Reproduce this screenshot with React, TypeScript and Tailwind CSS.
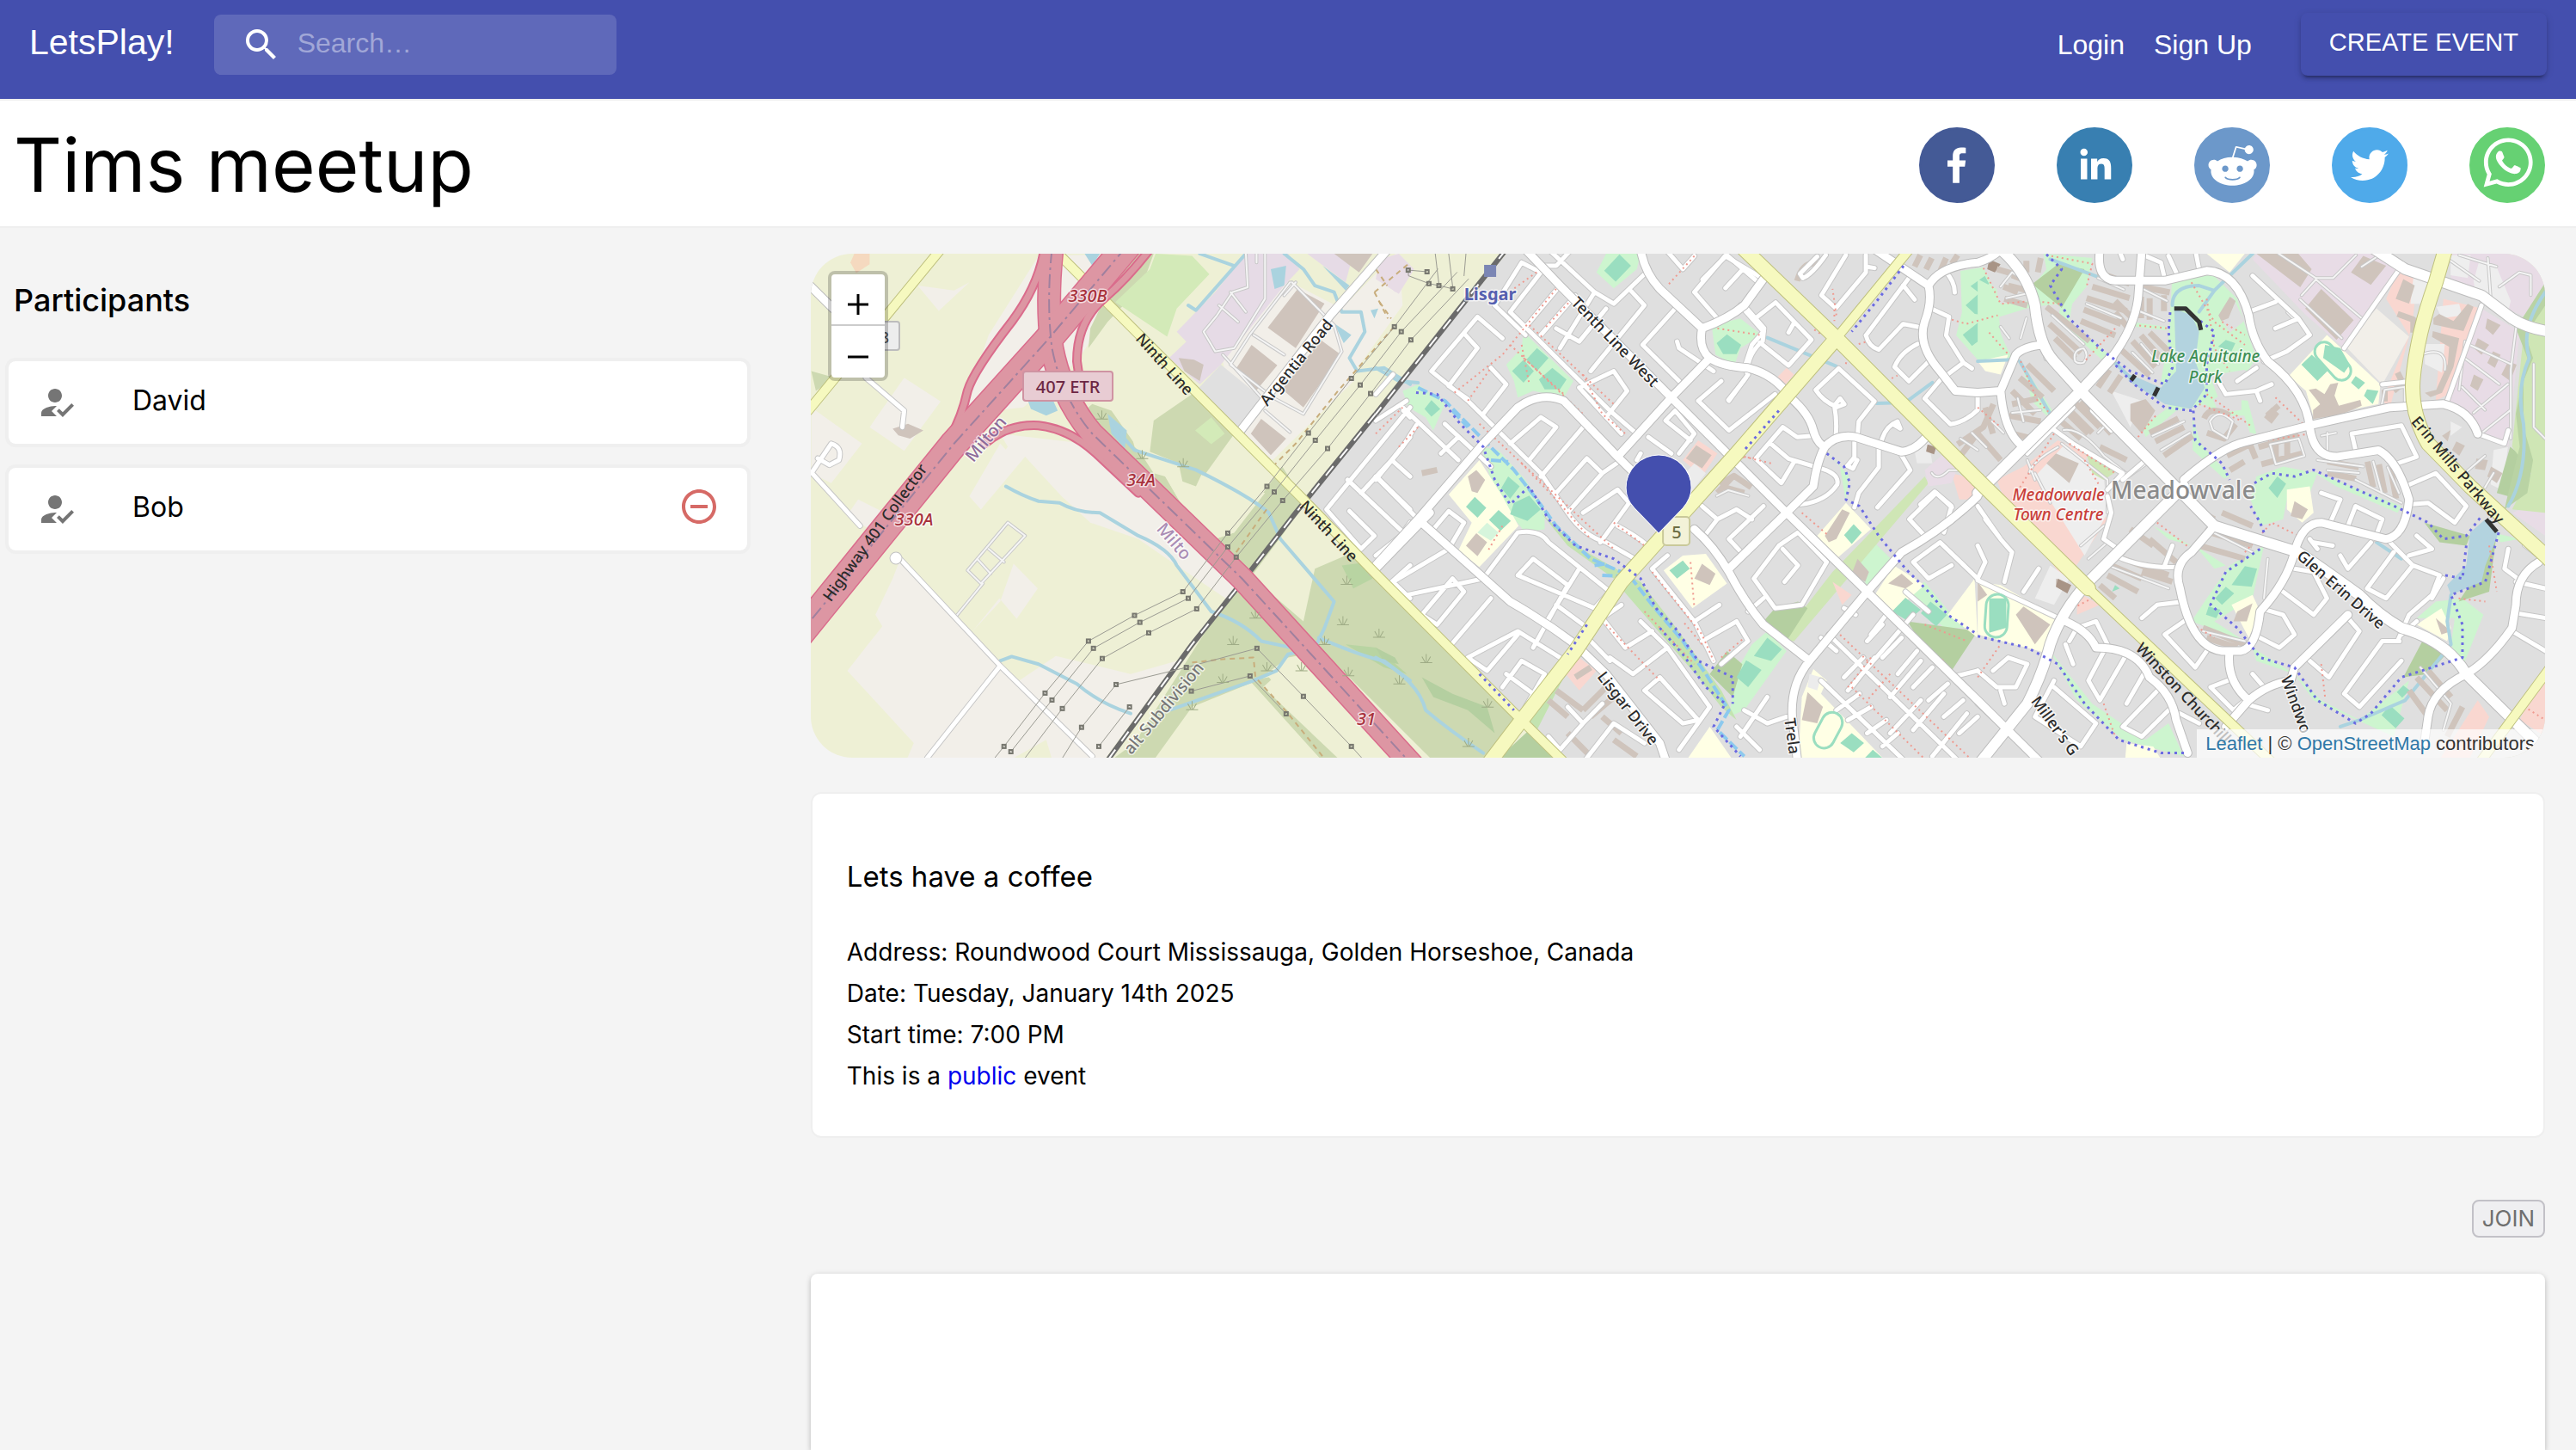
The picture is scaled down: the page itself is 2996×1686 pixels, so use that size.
import React from "react";
import { MdHowToReg, MdRemoveCircleOutline, MdSearch } from "react-icons/md";

/* ---------- social icons ---------- */

const socials = [
  {
    name: "Facebook",
    color: "#445a96",
    d: "M34.1,47V33.3h4.6l0.7-5.3h-5.3v-3.4c0-1.5,0.4-2.6,2.6-2.6l2.8,0v-4.8c-0.5-0.1-2.2-0.2-4.1-0.2 c-4.1,0-6.9,2.5-6.9,7V28H24v5.3h4.5V47H34.1z",
  },
  {
    name: "LinkedIn",
    color: "#387fb1",
    d: "M20.4,44h5.4V26.6h-5.4V44z M23.1,18c-1.7,0-3.1,1.4-3.1,3.1c0,1.7,1.4,3.1,3.1,3.1 c1.7,0,3.1-1.4,3.1-3.1C26.2,19.4,24.8,18,23.1,18z M39.5,26.2c-2.6,0-4.4,1.4-5.1,2.8h-0.1v-2.4h-5.2V44h5.4v-8.6 c0-2.3,0.4-4.5,3.2-4.5c2.8,0,2.8,2.6,2.8,4.6V44H46v-9.5C46,29.8,45,26.2,39.5,26.2z",
  },
  {
    name: "Reddit",
    color: "#6c98ca",
    d: "m 52.8165,31.942362 c 0,-2.4803 -2.0264,-4.4965 -4.5169,-4.4965 -1.2155,0 -2.3171,0.4862 -3.128,1.2682 -3.077,-2.0247 -7.2403,-3.3133 -11.8507,-3.4782 l 2.5211,-7.9373 6.8272,1.5997 -0.0102,0.0986 c 0,2.0281 1.6575,3.6771 3.6958,3.6771 2.0366,0 3.6924,-1.649 3.6924,-3.6771 0,-2.0281 -1.6575,-3.6788 -3.6924,-3.6788 -1.564,0 -2.8968,0.9758 -3.4357,2.3443 l -7.3593,-1.7255 c -0.3213,-0.0782 -0.6477,0.1071 -0.748,0.4233 L 32,25.212062 c -4.8246,0.0578 -9.1953,1.3566 -12.41,3.4425 -0.8058,-0.7446 -1.8751,-1.2104 -3.0583,-1.2104 -2.4905,0 -4.5152,2.0179 -4.5152,4.4982 0,1.649 0.9061,3.0787 2.2389,3.8607 -0.0884,0.4794 -0.1462,0.9639 -0.1462,1.4569 0,6.6487 8.1736,12.0581 18.2223,12.0581 10.0487,0 18.224,-5.4094 18.224,-12.0581 0,-0.4658 -0.0493,-0.9248 -0.1275,-1.377 1.4144,-0.7599 2.3885,-2.2304 2.3885,-3.9406 z m -29.2808,3.0872 c 0,-1.4756 1.207,-2.6775 2.6894,-2.6775 1.4824,0 2.6877,1.2019 2.6877,2.6775 0,1.4756 -1.2053,2.6758 -2.6877,2.6758 -1.4824,0 -2.6894,-1.2002 -2.6894,-2.6758 z m 15.4037,7.9373 c -1.3549,1.3481 -3.4816,2.0043 -6.5008,2.0043 l -0.0221,-0.0051 -0.0221,0.0051 c -3.0209,0 -5.1476,-0.6562 -6.5008,-2.0043 -0.2465,-0.2448 -0.2465,-0.6443 0,-0.8891 0.2465,-0.2465 0.6477,-0.2465 0.8942,0 1.105,1.0999 2.9393,1.6337 5.6066,1.6337 l 0.0221,0.0051 0.0221,-0.0051 c 2.6673,0 4.5016,-0.5355 5.6066,-1.6354 0.2465,-0.2465 0.6477,-0.2448 0.8942,0 0.2465,0.2465 0.2465,0.6443 0,0.8908 z m -0.3213,-5.2615 c -1.4824,0 -2.6877,-1.2002 -2.6877,-2.6758 0,-1.4756 1.2053,-2.6775 2.6877,-2.6775 1.4824,0 2.6877,1.2019 2.6877,2.6775 0,1.4756 -1.2053,2.6758 -2.6877,2.6758 z",
  },
  {
    name: "Twitter",
    color: "#4faaea",
    d: "M48,22.1c-1.2,0.5-2.4,0.9-3.8,1c1.4-0.8,2.4-2.1,2.9-3.6c-1.3,0.8-2.7,1.3-4.2,1.6 C41.7,19.8,40,19,38.2,19c-3.6,0-6.6,2.9-6.6,6.6c0,0.5,0.1,1,0.2,1.5c-5.5-0.3-10.3-2.9-13.5-6.9c-0.6,1-0.9,2.1-0.9,3.3 c0,2.3,1.2,4.3,2.9,5.5c-1.1,0-2.1-0.3-3-0.8c0,0,0,0.1,0,0.1c0,3.2,2.3,5.8,5.3,6.4c-0.6,0.1-1.1,0.2-1.7,0.2c-0.4,0-0.8,0-1.2-0.1 c0.8,2.6,3.3,4.5,6.1,4.6c-2.2,1.8-5.1,2.8-8.2,2.8c-0.5,0-1.1,0-1.6-0.1c2.9,1.9,6.4,2.9,10.1,2.9c12.1,0,18.7-10,18.7-18.7 c0-0.3,0-0.6,0-0.8C46,24.5,47.1,23.4,48,22.1z",
  },
  {
    name: "WhatsApp",
    color: "#66d173",
    d: "m42.32286,33.93287c-0.5178,-0.2589 -3.04726,-1.49644 -3.52105,-1.66732c-0.4712,-0.17346 -0.81554,-0.2589 -1.15987,0.2589c-0.34175,0.51004 -1.33075,1.66474 -1.63108,2.00648c-0.30032,0.33658 -0.60064,0.36247 -1.11327,0.12945c-0.5178,-0.2589 -2.17994,-0.80259 -4.14759,-2.56312c-1.53269,-1.37217 -2.56312,-3.05503 -2.86603,-3.57283c-0.30033,-0.5178 -0.03366,-0.80259 0.22524,-1.06149c0.23301,-0.23301 0.5178,-0.59547 0.7767,-0.90616c0.25372,-0.31068 0.33657,-0.5178 0.51262,-0.85437c0.17088,-0.36246 0.08544,-0.64725 -0.04402,-0.90615c-0.12945,-0.2589 -1.15987,-2.79613 -1.58964,-3.80584c-0.41424,-1.00971 -0.84142,-0.88027 -1.15987,-0.88027c-0.29773,-0.02588 -0.64208,-0.02588 -0.98382,-0.02588c-0.34693,0 -0.90616,0.12945 -1.37736,0.62136c-0.4712,0.5178 -1.80194,1.76053 -1.80194,4.27186c0,2.51134 1.84596,4.945 2.10227,5.30747c0.2589,0.33657 3.63497,5.51458 8.80262,7.74113c1.23237,0.5178 2.1903,0.82848 2.94111,1.08738c1.23237,0.38836 2.35599,0.33657 3.24402,0.20712c0.99159,-0.15534 3.04985,-1.24272 3.47963,-2.45956c0.44013,-1.21683 0.44013,-2.22654 0.31068,-2.45955c-0.12945,-0.23301 -0.46601,-0.36247 -0.98382,-0.59548m-9.40068,12.84407l-0.02589,0c-3.05503,0 -6.08417,-0.82849 -8.72495,-2.38189l-0.62136,-0.37023l-6.47252,1.68286l1.73463,-6.29129l-0.41424,-0.64725c-1.70875,-2.71846 -2.6149,-5.85116 -2.6149,-9.07706c0,-9.39809 7.68934,-17.06155 17.15993,-17.06155c4.58253,0 8.88029,1.78642 12.11655,5.02268c3.23625,3.21036 5.02267,7.50812 5.02267,12.06476c-0.0078,9.3981 -7.69712,17.06155 -17.14699,17.06155m14.58906,-31.58846c-3.93529,-3.80584 -9.1133,-5.95471 -14.62789,-5.95471c-11.36055,0 -20.60848,9.2065 -20.61625,20.52564c0,3.61684 0.94757,7.14565 2.75211,10.26282l-2.92557,10.63564l10.93337,-2.85309c3.0136,1.63108 6.4052,2.4958 9.85634,2.49839l0.01037,0c11.36574,0 20.61884,-9.2091 20.62403,-20.53082c0,-5.48093 -2.14111,-10.64081 -6.03239,-14.51915",
  },
];

/* ---------- map data ----------
   The map is drawn from sheets, each with its own drawing grid: three for the
   whole height (west, centre, east) and two detail sheets in the north-east.
   Strokes keep their width whatever the sheet's scale. */

const WEST = "translate(-3 -5) scale(0.4464 0.3827)";
const CENTRE = "translate(657 -5) scale(0.4464 0.3827)";
const EAST = "translate(1357 -5) scale(0.4439 0.3827)";
const DETAIL_A = "translate(1037 -5) scale(0.3333)";
const DETAIL_B = "translate(1517 -5) scale(0.3333)";

type Item = [sheet: string, d: string];

const areas: [fill: string, sheet: string, d: string][] = [
  ["#f2efe9", WEST, "M400,500 L470,260 L600,20 L900,13 L780,200 L700,340 L560,480Z M500,560 L720,590 L1130,1010 L1100,1070 L960,960 L860,880 L735,830 L660,750 L565,630 L450,790 L420,750 L520,600Z"],
  ["#f2efe9", WEST, "M175,1110 L220,1000 L240,940 L500,1265 L550,1310 L645,1235 L840,1290 L960,1250 L760,1568 L640,1568 L620,1490 L500,1568 L250,1568 L275,1500 L102,1280 L193,1145Z M535,955 L598,1030 L543,1122 L498,1060 L428,1160 L500,1070Z M285,110 L340,187 L420,100 L380,125Z M160,540 L250,390 L345,462 L250,612Z M8,480 L140,590 L60,710 L8,680Z M130,760 L200,800 L160,850 L100,810Z M420,750 L450,790 L540,640 L500,590Z"],
  ["#f2efe9", WEST, "M1080,340 L1240,90 L1390,180 L1530,13 L1690,13 L1660,60 L1430,390 L1210,640 L1120,560Z"],
  ["#cdd9b1", WEST, "M820,13 L900,13 L870,110 L780,220 L730,300 L735,240 L780,130 L780,100Z M740,470 L790,490 L850,590 L900,680 L930,690 L1010,850 L1060,880 L1110,860 L1235,660 L1290,760 L1240,860 L1150,1000 L1080,930 L860,700 L720,490Z M1010,440 L1110,560 L1030,690 L890,620 L960,500Z M8,370 L70,390 L20,430Z"],
  ["#eef0d5", WEST, "M830,510 L1010,680 L1190,740 L1110,860 L1060,880 L1010,850 L930,690 L850,600Z"],
  ["#cdd9b1", WEST, "M900,520 L1000,440 L1110,560 L1030,680 L890,615Z M965,650 L1030,670 L1010,720 L975,705Z"],
  ["#cdd9b1", WEST, "M1320,970 L1410,925 L1478,985 L1858,1430 L1790,1568 L1640,1568 L1160,1010 L1180,1020 L1290,1130Z M1090,1060 L1130,1020 L1340,1220 L1250,1240 L1170,1310 L1000,1390 L890,1568 L770,1568 L850,1500Z M1150,1310 L1200,1300 L1400,1568 L1350,1568Z"],
  ["#b8d4a2", WEST, "M1390,960 L1460,950 L1470,1000 L1420,1030Z M1400,1200 L1480,1210 L1560,1290 L1500,1270Z"],
  ["#eef0d5", WEST, "M1260,1250 L1470,1470 L1530,1568 L1400,1568 L1185,1330Z"],
  ["#d3eab8", WEST, "M905,13 L1000,20 L1045,75 L960,180 L935,265 L800,160 L890,60Z M1050,510 L1085,560 L1050,592 L1008,550Z"],
  ["#e6dbe6", WEST, "M1140,13 L1250,13 L1280,60 L1240,110 L1075,350 L1020,410 L940,330 L985,280 L960,250 L1060,130Z M1300,13 L1420,13 L1400,100Z M1500,40 L1568,13 L1575,100 L1530,130 L1480,80Z"],
  ["#e0e0e0", WEST, "M1075,350 L1180,450 L1120,560 L1010,430Z"],
  ["#aad3df", WEST, "M560,420 L600,360 L650,490 L620,505 L580,485Z M720,13 L760,13 L740,50Z M780,500 L830,550 L825,605 L790,560Z M1205,60 L1245,50 L1240,110 L1215,120Z M1370,225 L1415,260 L1395,285Z M1340,50 L1410,110 L1400,125Z M1465,185 L1485,180 L1475,210Z"],
  ["#cfc4bc", WEST, "M1275,120 L1345,165 L1270,300 L1197,238Z M1155,290 L1222,352 L1165,432 L1113,365Z M1335,275 L1388,320 L1290,480 L1235,425Z M1180,515 L1245,575 L1205,625 L1153,560Z M965,330 L1005,335 L1030,350 L1020,400 L980,370Z M1370,13 L1470,13 L1435,70Z M220,545 L260,530 L300,550 L265,575 L235,565Z"],
  ["#f5d9bf", WEST, "M120,13 L160,13 L160,45 L125,72 L110,40Z"],
  ["#dfdfdf", CENTRE, "M350,0 L0,500 L-200,780 L0,985 L380,1430 L500,1568 L3127,1568 L3127,0Z"],
  ["#eef0d5", CENTRE, "M60,13 L240,13 L220,110 L0,430 L-40,500 L-60,380 L70,170Z"],
  ["#e8dce6", CENTRE, "M10,30 L60,13 L100,60 L60,135 L0,90Z"],
  ["#cdf5cf", CENTRE, "M385,250 L515,400 L490,450 L410,430 L370,450 L360,400 L340,350 L380,300Z M600,13 L690,13 L680,60 L620,118 L575,70Z M875,230 L950,210 L1005,260 L950,300 L935,350 L885,320Z M70,430 L110,410 L180,470 L150,550 L130,510 L85,480Z M275,600 L320,610 L390,700 L440,800 L440,850 L390,860 L340,790 L300,700Z M1020,1160 L1070,1220 L960,1400 L920,1420 L940,1280 L980,1200Z M1230,940 L1290,880 L1350,950 L1320,1000 L1280,1020Z M1390,1040 L1430,1010 L1500,1110 L1568,1150 L1480,1150Z"],
  ["#cdf5cf", DETAIL_A, "M900,75 L980,62 L1040,190 L1150,180 L1150,130 L1200,70 L1190,15 L1360,30 L1340,130 L1290,190 L1280,250 L1420,370 L1400,390 L1240,250 L1250,190 L1150,200 L1020,240 L1070,370 L960,385 L885,300 L905,220Z M1110,390 L1220,560 L1200,580 L1150,530Z M430,700 L510,790 L500,880 L480,760Z"],
  ["#c3e3b0", CENTRE, "M490,1300 L420,1460 L400,1430 L470,1320Z M640,980 L690,1010 L770,1130 L900,1340 L940,1430 L900,1390 L840,1300 L640,1030Z M430,800 L520,900 L640,980 L620,1000 L500,900Z"],
  ["#cfe6b5", CENTRE, "M1430,690 L1440,710 L1090,1190 L1050,1190 L1190,980Z"],
  ["#b4cfa0", CENTRE, "M1100,1070 L1125,1090 L1070,1190 L1010,1130 L1040,1090Z M915,1220 L955,1260 L930,1360 L870,1290Z M1385,1130 L1568,1160 L1500,1280 L1440,1230Z M400,1460 L480,1568 L300,1568Z M1190,1460 L1235,1450 L1210,1568 L1130,1568Z M0,1210 L50,1240 L60,1260 L20,1250Z M120,1300 L200,1350 L290,1390 L310,1470 L240,1400 L150,1360Z"],
  ["#ffffe5", CENTRE, "M270,640 L330,750 L372,840 L270,965 L215,915 L250,830 L190,745Z M800,930 L860,925 L915,1015 L825,1090 L750,975Z M1225,770 L1290,850 L1200,940 L1150,870Z M1350,960 L1430,1020 L1350,1100 L1300,1050Z M1140,1275 L1175,1310 L1160,1350 L1340,1568 L1100,1568 L1110,1360Z M870,1450 L940,1568 L800,1568Z M1560,1000 L1568,1180 L1490,1110Z"],
  ["#f9d7d0", CENTRE, "M840,580 L890,620 L850,690 L800,640Z M530,1240 L575,1280 L530,1340 L495,1290Z M1190,1010 L1240,1050 L1215,1080Z M1500,680 L1568,700 L1568,760 L1520,760Z M1070,360 L1090,380 L1060,420 L1045,390Z"],
  ["#e8dce6", CENTRE, "M1480,620 L1520,650 L1500,710 L1440,720 L1430,670Z"],
  ["#ececec", CENTRE, "M830,650 L860,680 L820,740 L790,700Z M1400,590 L1440,580 L1450,650 L1410,650Z M1130,1290 L1160,1300 L1150,1340 L1125,1330Z"],
  ["#9adec0", CENTRE, "M420,300 L450,330 L420,370 L392,335Z M385,335 L412,370 L385,405 L355,370Z M460,360 L497,395 L480,425 L440,425 L425,395Z M635,15 L665,50 L625,98 L595,65Z M915,258 L952,290 L940,318 L905,318 L888,285Z M145,458 L168,485 L145,508 L127,485Z M345,690 L375,720 L350,758 L327,725Z M400,748 L430,790 L395,825 L350,805 L360,770Z M258,752 L288,785 L265,815 L235,782Z M320,792 L352,825 L325,855 L295,822Z M800,945 L818,970 L785,1000 L765,975Z M1245,835 L1266,860 L1240,895 L1220,868Z M1380,1058 L1420,1095 L1385,1128 L1345,1100Z M1445,1070 L1488,1110 L1460,1145 L1420,1105Z M1020,1180 L1058,1215 L1030,1250 L985,1235Z M965,1248 L1005,1278 L970,1330 L940,1300Z M1240,1470 L1272,1500 L1245,1528 L1210,1500Z M1295,1520 L1320,1545 L1300,1568 L1270,1550Z"],
  ["#9adec0", DETAIL_A, "M935,128 L985,92 L1000,120 L960,148Z M985,135 L1030,215 L1000,232 L950,225 L918,195Z M970,248 L1002,290 L940,337 L908,298Z"],
  ["#d6f5dc", CENTRE, "M290,830 L320,860 L300,885 L265,860Z"],
  ["#cfc4bc", CENTRE, "M835,595 L875,625 L850,665 L808,635Z M240,690 L262,670 L285,700 L265,740 L250,735Z M262,862 L290,890 L265,932 L235,900Z M850,955 L885,985 L870,1020 L830,1000Z M1215,790 L1235,800 L1200,880 L1180,890 L1170,870Z M1370,985 L1400,1015 L1380,1030 L1335,1015Z M1255,940 L1285,980 L1275,1010 L1240,985Z M1125,1345 L1165,1390 L1150,1440 L1110,1430Z"],
  ["#f9d7d0", EAST, "M210,580 L290,620 L260,700 L340,820 L230,1010 L180,930 L90,820 L50,700 L120,660Z M1100,70 L1150,90 L1140,220 L1080,480 L1060,460 L1130,260 L1070,150Z M1220,150 L1320,180 L1250,430 L1200,460Z M1310,1370 L1340,1420 L1280,1568 L1200,1568Z M260,1040 L320,1080 L260,1110Z M1440,1380 L1487,1300 V1480 L1420,1430Z"],
  ["#eeeeee", EAST, "M230,590 L330,690 L340,800 L280,930 L150,690Z M350,430 L430,460 L400,540Z M1150,90 L1185,110 L1160,180Z M190,960 L240,1000 L200,1080 L150,1060Z"],
  ["#e8dce6", EAST, "M730,13 H1050 L1100,60 L960,300 L860,200 L720,30Z M1240,13 H1487 V230 L1240,110Z M1320,180 L1420,250 L1390,600 L1300,540 L1230,470Z M1400,800 L1487,870 V760Z"],
  ["#eeeeee", DETAIL_B, "M1270,40 L1330,60 L1380,180 L1370,220 L1260,170 L1250,110Z M1170,20 L1240,20 L1230,100 L1170,90Z M1120,200 L1200,190 L1210,230 L1140,240Z M1080,330 L1150,330 L1140,430 L1080,400Z M1040,100 L1095,110 L1060,190 L1030,190Z M1170,600 L1210,620 L1170,650Z M1320,700 L1370,690 L1350,840 L1310,820Z"],
  ["#f2efe9", EAST, "M1045,180 L1130,265 L1060,410 L960,290Z"],
  ["#cdf5cf", EAST, "M510,80 L610,70 L680,150 L700,230 L730,330 L690,400 L600,470 L520,490 L440,570 L430,540 L500,480 L480,400 L500,270Z M0,90 L50,120 L60,260 L90,330 L0,340Z M730,690 L800,660 L890,680 L870,740 L810,760 L800,820 L740,840 L715,760Z M660,960 L750,900 L720,1060 L620,1130 L700,1190 L560,1130 L600,1060Z M720,1210 L830,1290 L900,1370 L1000,1430 L1130,1310 L1090,1480 L880,1370 L830,1290 L730,1250Z M1270,1060 L1325,1110 L1270,1270 L1240,1200 L1250,1120 L1150,1120 L1200,1070Z M190,1220 L300,1380 L440,1490 L500,1440 L540,1540 L380,1490 L260,1370Z M870,670 L1110,780 L1100,800 L940,720Z M460,840 L560,900 L500,880Z M690,450 L705,450 L730,560 L720,560Z M1350,860 L1420,880 L1370,890Z M570,900 L650,960 L620,970Z"],
  ["#cdf5cf", DETAIL_B, "M290,520 L340,520 L360,570 L440,560 L440,520 L460,520 L490,640 L470,640 L450,580 L360,580Z M270,590 L300,680 L400,790 L380,800 L270,700Z M70,255 L180,270 V282 L70,270Z"],
  ["#dfdfdf", DETAIL_B, "M360,230 L410,165 L450,250 L400,290Z M330,440 L450,420 L560,480 L500,530 L360,520Z"],
  ["#b4cfa0", EAST, "M210,45 L280,60 L220,178 L143,105Z M1165,1190 L1235,1220 L1180,1290 L1115,1300Z M1170,830 L1290,870 L1280,900 L1210,890Z M1330,870 L1360,860 L1340,1040 L1260,1070 L1300,1000Z M1395,600 L1450,650 L1420,760 L1360,740Z"],
  ["#cfe6b5", EAST, "M1487,140 L1430,260 L1400,600 L1450,680 L1400,790 L1487,800Z M285,620 L370,670 L330,700 L300,680Z"],
  ["#b9d3a4", EAST, "M1487,100 L1410,240 L1440,330 L1410,500 L1420,600 L1390,740 L1380,790 L1440,740 L1455,640 L1430,540 L1430,400 L1455,330 L1435,260 L1487,170Z"],
  ["#ffffe5", EAST, "M915,260 L1055,410 L1050,470 L880,510 L860,430 L815,385Z M600,13 H700 L660,70Z M0,1010 L60,1020 L210,1120 L175,1225 L0,1170Z M810,730 L870,720 L880,800 L850,830 L810,790Z M665,1080 L720,1050 L740,1100 L710,1180Z M1150,1140 L1215,1090 L1240,1150 L1230,1190Z M390,1500 L460,1510 L490,1568 H385Z M0,340 L80,320 L60,380 L20,370Z"],
  ["#b3d3df", EAST, "M515,180 L560,200 L580,250 L570,340 L595,420 L560,485 L490,470 L395,400 L400,380 L480,420 L520,370Z M1330,820 L1365,860 L1330,960 L1320,1010 L1240,1050 L1230,1020 L1280,960 L1290,860Z"],
  ["#9adec0", EAST, "M910,290 L950,300 L975,350 L960,375 L905,330Z M875,320 L920,365 L890,400 L848,350Z M990,385 L1015,405 L998,425 L978,405Z M1020,425 L1050,430 L1035,470 L1012,445Z M30,1060 H75 V1150 L30,1165Z M700,962 L732,970 L718,1025 L665,1020Z M650,1025 L672,1045 L640,1080 L622,1060Z M605,1085 L636,1095 L625,1120 L598,1110Z M785,690 L808,712 L785,755 L762,725Z M650,275 L675,285 L665,310 L630,295Z M1115,1325 L1132,1340 L1112,1362 L1098,1345Z M1080,1385 L1118,1425 L1095,1455 L1058,1415Z M360,1020 L372,1030 L352,1040Z"],
  ["#cfc4bc", EAST, "M730,13 H840 L875,60 L845,115Z M900,120 L985,215 L940,275 L858,180Z M1010,20 L1070,50 L1030,108 L978,70Z M1115,90 L1145,110 L1130,165 L1095,150Z M205,620 L265,650 L240,710 L180,650Z M400,470 L440,455 L465,490 L430,560 L400,520Z M1335,210 L1370,230 L1350,260 L1330,240Z M1310,270 L1340,290 L1320,320 L1300,300Z M1350,310 L1370,320 L1355,360 L1335,345Z M1390,340 L1412,350 L1395,400 L1372,380Z M1300,380 L1325,395 L1310,430 L1290,415Z M120,1085 L190,1140 L150,1200 L100,1110Z M205,1000 L245,1020 L235,1045 L205,1025Z M830,765 L865,790 L850,820 L820,810Z M680,1100 L720,1075 L705,1130 L670,1130Z M1200,1120 L1240,1160 L1215,1170Z M1345,660 L1375,680 L1360,710 L1335,690Z M770,480 L790,500 L770,530 L750,510Z M0,1010 L25,1050 L0,1070Z"],
  ["#cfc4bc", DETAIL_B, "M675,490 L700,485 L730,505 L750,470 L778,465 L765,510 L780,545 L855,525 L860,545 L790,575 L690,592 L690,560 L715,540Z M360,230 L400,165 L420,180 L395,240 L370,250Z M1110,240 L1130,225 L1180,250 L1230,190 L1250,200 L1215,285 L1110,262Z M1108,285 L1200,310 L1180,410 L1140,500 L1100,515 L1080,500 L1120,490 L1160,400 L1165,340 L1105,305Z M1190,670 L1220,685 L1200,720 L1175,700Z M1260,730 L1300,735 L1290,770 L1255,765Z M1140,650 L1170,630 L1160,670Z"],
  ["#a89486", EAST, "M30,30 L60,45 L45,70 L25,60Z M210,1000 L245,1020 L235,1045 L205,1025Z"],
  ["#a89486", DETAIL_A, "M785,680 L815,690 L808,715 L780,705Z"],
];

const streams: Item[] = [
  [WEST, "M515,720 Q560,750 600,765 L655,770 Q700,800 760,800 L860,870 Q940,910 960,960 L1050,1100 Q1130,1130 1180,1190 L1260,1210 M500,1250 L530,1237 L600,1260 L700,1320 Q760,1380 840,1410 M940,1400 L1160,1310 L1220,1280 L1250,1230 L1320,1210 L1345,1150 L1370,1070 L1230,880 L1200,800 Q1150,750 1010,670 L850,610 L790,530 M1330,1180 Q1450,1240 1500,1250 L1568,1310 M990,170 L1010,185 L1140,13 M1020,13 L1110,50 M1240,13 L1290,60 L1320,110 L1370,130 L1390,190 L1440,190 L1450,250 L1410,330 L1430,370 L1500,360 L1568,410"],
  [CENTRE, "M0,1240 Q110,1310 130,1400 Q190,1460 280,1530 M1020,268 L1200,355 M1305,468 L1380,465 L1450,405 M0,360 L60,400 L110,405"],
  [EAST, "M0,340 L90,335 M110,340 L190,500 M510,170 Q510,110 580,110 L620,125 L580,190 M620,125 L720,13 M1487,130 Q1420,240 1445,330 Q1410,420 1430,530 Q1440,680 1390,780 M1240,1050 L1230,1130 L1240,1200 L1120,1370 L1000,1430 L950,1450 M1045,890 L1110,940 M190,30 L330,90 M360,345 L400,390"],
];

const creek: Item[] = [
  [CENTRE, "M110,420 L180,460 L290,590 L360,670 L420,760 L470,840 L560,940 L660,990 L720,1080 L800,1190 L860,1290 L920,1400 L890,1460 L960,1540 M200,490 L240,540 M300,640 L345,645 M570,960 L600,955 M590,990 L640,993"],
];

const townhouses: Item[] = [
  [EAST, "M80,110 L150,130 M70,150 L130,170 M50,60 L110,80 M130,350 L200,430 M110,390 L170,450 M90,430 L150,500 M220,480 L290,560 M250,460 L320,540 M280,470 L350,560 M320,600 L390,640 M350,960 L430,1000 M340,990 L420,1040 M320,1020 L360,1060 M380,940 L500,990 M430,980 L510,1010 M580,900 L700,940 M610,860 L720,900 M590,1150 L700,1200 M600,1180 L680,1210 M640,800 L720,840 M560,780 L620,820 M1090,430 L1120,400 M1150,1300 L1230,1400 M1180,1280 L1240,1360 M1130,1340 L1180,1420 M1230,1480 L1270,1390 M400,850 L460,900 M450,880 L520,950 M0,560 L60,640 M20,480 L40,560"],
  [CENTRE, "M470,1340 L540,1400 M450,1370 L500,1420 M540,1400 L600,1330 M560,1420 L620,1360 M500,1470 L560,1540 M590,1420 L640,1470 M520,1300 L560,1270 M620,1490 L680,1540 M890,740 L930,690 M900,720 L960,740 M120,680 L160,670"],
  [DETAIL_A, "M1380,80 L1490,120 M1360,130 L1490,170 M1340,170 L1480,215 M1330,210 L1460,260 M1320,250 L1440,300 M1200,200 L1350,320 M1210,260 L1320,360 M1230,310 L1300,380 M1050,130 L1100,150 M1080,90 L1130,110 M1130,40 V80 M1180,30 L1170,80 M740,60 L760,20 M780,70 L800,30 M830,75 L850,30 M870,50 L890,20 M1015,540 L980,620 L890,680 M960,640 L900,720 M1080,540 L1170,520 M1070,580 L1180,600 M1070,640 L1150,660 M1240,590 L1320,660 M1280,560 L1360,640 M1320,530 L1400,600 M60,820 L110,790 L170,830 M330,110 Q350,40 400,50 M1420,420 L1380,480 M1460,440 L1420,500"],
  [DETAIL_B, "M90,130 L190,150 M90,165 V240 M120,170 V245 M170,160 V215 M120,290 L190,360 M90,300 L160,380 M60,320 L140,410 M20,350 L120,440 M0,180 L60,240 M0,220 L50,280 M120,640 L220,590 M140,670 L240,620 M170,720 L270,650 M310,590 Q330,540 400,580 M320,640 L380,660 L420,610 M390,720 L470,680 L490,730 M500,690 L640,650 M510,750 L660,710 M560,680 V740 M600,670 V730 M400,770 L450,740 M740,740 L850,760 M740,780 L840,800 M880,740 L900,830 M920,750 L940,850 M960,760 L980,870 M985,225 L1040,245 V290 M985,430 L1000,460 M940,490 V530 M530,580 L570,545"],
];

const minor: Item[] = [
  [WEST, "M10,680 L135,840 M8,680 L60,590 Q90,600 80,640 L55,655 L25,635 M150,390 L250,490 L245,540 M235,935 L500,1265 L310,1545 M500,1265 L740,1540 M1568,480 L1350,790 L1440,910 L1475,870 L1410,795 M1405,700 L1550,860 M1480,690 L1520,640 L1568,690 M1520,640 L1568,570 M1480,690 L1568,790 M1550,860 L1568,830 M1520,1010 L1568,960 M1520,1010 L1568,1060 M1550,490 L1568,510 M1440,740 L1480,690"],
  [CENTRE, "M0,440 L45,380 M145,370 L265,205 L330,270 M230,255 L265,300 L190,415 M145,370 L240,460 L430,680 L500,800 Q540,870 600,890 L690,950 L720,920 Q710,890 630,840 M190,415 L240,455 M70,480 L215,640 M105,535 L70,600 M215,570 L170,620 M180,530 L300,660 M0,520 L80,460 M310,170 L390,260 M380,40 L310,170 M380,40 L430,70 L350,190 M350,190 L610,490 L680,560 M480,110 L380,250 M520,140 L430,260 M450,0 L570,130 L620,165 L700,75 M570,130 L480,300 M600,180 L530,280 L470,240 M660,120 L700,170 L560,370 M280,500 L340,410 L300,360 M530,420 L620,370 L655,430 L600,510 M530,420 L640,560 M780,180 L695,290 L790,400 M430,50 L470,50 L510,0 M350,590 L430,510 L470,540 L400,640 M430,690 L540,540 M470,740 L550,635 L590,680 L500,800 M540,800 L630,730 L660,770 L585,890 M590,680 L640,640 M0,690 L110,820 M0,700 L70,600 M150,850 L190,795 L230,830 L190,910 M110,830 L0,930 M45,1010 L190,910 M45,1010 L80,1050 L280,1000 M120,1110 L200,1000 L230,1040 L160,1140 L120,1110 M190,1210 L300,1060 M240,1240 L370,1160 L480,1240 M240,1240 L290,1280 L370,1170 M330,1330 L380,1250 L440,1290 L390,1390 M340,1290 L410,1350 M280,1000 L370,860 Q430,850 450,890 L610,1040 L570,1090 L370,990 L410,940 L500,1020 L410,1210 M530,970 L440,1140 M470,1080 L540,1140 M720,970 L830,1130 L880,1250 M720,970 L760,930 M830,1130 L895,1080 M850,1190 L940,1130 L970,1190 L900,1260 M590,1120 L640,1080 M590,1120 L650,1210 L720,1160 M610,1240 L670,1290 L760,1210 M690,1130 L760,1210 L870,1390 L790,1520 M700,1340 L740,1300 L840,1430 L800,1440 L700,1340 M560,1190 L610,1250 M540,1440 L590,1380 M450,1480 L480,1520 L540,1440 L500,1390 M540,1560 L620,1440 L700,1500 M755,0 L800,60 L830,20 M830,130 L910,20 L1010,90 M830,130 L890,210 M880,370 L790,300 L785,280 M960,360 L980,290 L1010,250 L950,170 M970,380 L920,460 M840,460 L900,400 M840,460 L920,550 L1040,440 M755,520 L780,490 L830,560 L790,620 M755,520 L820,580 M710,570 L770,620 M680,640 L690,620 M985,1000 L1050,900 L1100,860 L1175,950 L1110,1080 L1040,1090 L985,1000 M1060,910 L1100,960 L1065,1010 M920,880 L1010,780 M920,880 L960,930 M850,780 L890,820 L940,790 L980,820 M890,820 L850,880 M1010,1060 L970,1100 M1020,1360 L950,1480 M940,1450 L1000,1520 M960,1400 L1020,1440 L1070,1420 M1500,1300 L1568,1280 M1440,1100 L1380,1040 M1390,820 L1460,740 L1500,780 L1480,860 M1390,820 L1430,870 M1400,950 L1470,890 L1568,1000 M1400,950 L1440,1000 L1500,960"],
  [DETAIL_A, "M0,105 L85,20 L200,120 M80,135 L140,70 M185,240 L255,185 L380,315 L300,405 L200,325 M300,290 L320,255 M145,195 L215,275 L210,320 Q160,360 155,430 M90,525 L150,450 M350,100 L340,85 L400,25 M350,100 Q380,90 430,20 M415,160 L500,20 M415,160 L465,205 L570,80 V20 M570,60 L600,65 M570,300 L720,100 M700,125 L740,175 M570,300 Q580,340 615,350 L700,260 L750,270 M670,410 Q690,360 750,330 M670,410 L720,460 L795,385 M795,205 L860,235 L850,300 L910,395 L940,415 M850,440 L910,395 M845,75 Q880,110 880,150 M775,520 L830,455 M775,520 L865,610 Q920,600 960,560 V505 M395,490 L475,415 L600,530 L545,600 L540,660 M395,490 Q420,530 470,550 L495,540 L480,520 L460,545 Q470,600 465,650 M620,690 Q630,620 680,600 L690,625 L665,610 M185,730 L280,620 L330,655 L385,650 M185,730 L275,815 L320,740 M235,675 L300,730 L400,760 Q480,780 470,820 Q430,880 340,890 M530,665 V725 L505,755 L525,765 L540,735 M615,695 V760 L545,850 L530,900 M690,710 L725,770 L610,900 M760,890 L810,845 L870,900 M1190,325 L1200,380"],
  [CENTRE, "M1180,1170 L1530,1568 M1160,1310 L1390,1568 M1230,1340 L1400,1110 M1300,1240 L1240,1330 M1330,1110 L1290,1170 M1250,1110 L1220,1090 M1340,1360 L1420,1250 M1420,1370 L1340,1470 M1480,1350 L1400,1460 M1540,1410 L1450,1540 M1220,1300 L1270,1240 M1260,1350 L1200,1400 M1290,1390 L1230,1430 M1330,1430 L1280,1470 M1360,1470 L1320,1510 M1200,1220 L1160,1180 M1280,1190 L1320,1140 M1320,1240 L1370,1180 M1360,1290 L1410,1220 M1400,1330 L1450,1270 M1440,1370 L1490,1320 M1480,1420 L1530,1370 M1520,1470 L1568,1420"],
  [EAST, "M490,90 L480,40 L440,20 M520,70 L500,20 M580,60 L570,0 M380,30 L370,0 M720,80 L840,210 L870,260 L810,310 L750,340 M710,190 L780,160 M840,210 L780,240 M1105,60 L960,300 M1320,170 L1230,460 M630,400 L650,440 L730,430 L770,410 M680,400 L730,360 M730,430 L740,460 M980,560 L1110,535 L1150,630 L1100,650 M980,560 L990,610 M1120,720 L1200,680 L1280,780 L1250,830 L1180,770 L1130,775 M900,740 L950,760 L920,840 M990,780 L1060,820 L1040,880 M990,780 L970,840 M880,890 L930,900 M870,880 L890,910 M950,930 L970,970 L1030,890 M1080,890 L1140,960 L1210,990 L1190,1050 L1130,1110 L1100,1190 M1140,960 L1070,1060 L1020,1030 L1090,920 M1150,870 L1190,910 L1130,930 M1390,910 L1380,970 L1415,1000 M1410,1105 L1487,1120 M1400,1160 L1487,1220 M1410,1010 L1487,1030 M830,970 L880,980 L915,1060 L880,1110 L800,1040 M740,1090 L800,1110 L830,1170 L790,1210 L740,1180 M540,1130 L490,1170 L570,1270 L600,1220 M970,1120 L1000,1160 L920,1300 L870,1250 M1105,1190 L1060,1190 L960,1350 L1000,1390 L1110,1250 M655,1310 L610,1330 L670,1400 L700,1370 M720,1290 L750,1330 M700,1380 L760,1400 M240,1190 L260,1150 L310,1130 L340,1200 L290,1310 L320,1370 L390,1230 M440,1280 L390,1380 M480,1330 L380,1450 L430,1480 L500,1400 M530,1410 L580,1440 M40,1280 L80,1240 L130,1260 L100,1330 L50,1330 L0,1280 M0,1380 L150,1540 M60,1340 L70,1380 M200,1310 L150,1420 L270,1510 L310,1440 L200,1330 M230,1200 L250,1260 M0,780 L60,880 L90,920 L70,1010 M60,880 L20,820 M0,900 L20,950 L0,1000 M160,970 L120,1040 M0,1005 L230,1130 M360,930 Q430,970 530,965 M510,900 L490,960 M430,1120 L470,1080 L540,1070 M330,880 L350,800 L340,750 M380,920 L330,880 M130,620 L250,480 M190,540 L250,590 L380,680 M380,680 L340,730 M440,640 L380,700 M300,490 L350,550 M1060,410 L1140,400 M1310,560 L1380,590 L1390,550 M1150,1130 L1110,1170 M1190,1060 L1220,1000"],
];

const service: Item[] = [
  [WEST, "M1140,13 L1145,115 L1105,130 L1065,200 L1030,250 L1060,310 L1110,300 L1190,150 V13 M1100,130 L1140,190 M1070,170 L1120,220 M1270,100 L1240,140 M1255,100 L1150,260 L1100,350 L1210,450 L1290,500 L1390,310 L1370,230 L1260,100 M1160,260 L1240,320 M1190,490 L1255,555 M520,830 L565,870 L450,1015 L415,975 L520,830 M470,910 L510,950 M440,940 L475,985 M455,1015 L385,1115 M1080,320 L1180,450 M1130,560 L1200,640 M1168,13 V40"],
  [EAST, "M270,900 L330,840 M290,940 L340,890 M220,590 L340,700 V800 M150,680 L190,770 M130,640 L150,700 M890,640 L1010,660 M990,700 L1110,770 M1160,1270 L1240,1380 L1220,1460 M760,940 L750,1060 M340,960 L500,1030 M600,850 L720,920 M590,1160 L700,1190 M1430,900 L1487,950"],
  [DETAIL_B, "M570,15 L700,100 L760,100 L840,20 M650,160 L700,105 L860,240 M645,175 L790,310 M860,60 L930,15 M1170,40 L1270,110 M1200,20 L1330,60 M1300,30 L1310,170 M1340,130 L1410,80 L1450,90 V160 M1210,480 L1290,560 M1220,380 L1340,470 M1230,330 L1380,400 M1200,490 L1220,320 M1250,570 L1370,470 M1280,640 L1380,560 M1060,370 Q1160,330 1150,420 M1400,260 L1380,420 L1380,660 M100,140 L180,180 M70,210 L170,250 M90,330 L150,400 M60,360 L130,430 M130,650 L240,600 M160,700 L260,640 M330,600 Q360,550 410,600 L390,660 L340,630Z M540,680 L560,750 L660,720 L640,660Z M740,770 L850,780 M900,740 L930,850 M950,760 L990,850 M720,650 L770,640 M740,640 V700 M1160,720 L1220,780 L1290,720 M1320,780 L1290,830 M1460,400 V620 L1500,660 M930,540 L940,490 L1010,480 V550 M600,220 L620,240"],
  [DETAIL_A, "M1040,130 L1080,80 L1130,110 M1060,170 L1150,150 M1040,270 L1070,310 M1130,240 L1110,310 M1220,230 L1330,330 M1380,100 L1470,140 M1340,190 L1460,240 M1300,390 Q1290,350 1330,345 Q1350,370 1330,395 Q1310,400 1300,390 M900,660 L960,700 M940,640 L990,690 M1010,600 L1050,640 M1080,570 L1180,560 M1100,520 L1120,600 M1140,780 Q1150,740 1240,690 M1260,630 Q1320,620 1400,720 L1490,790 M1490,790 L1560,740 M1380,640 L1420,600 M1240,560 L1320,490 L1360,540 M800,780 Q820,810 860,770 L890,770 M50,860 L90,840 L160,860"],
];

const tertiary: Item[] = [
  [WEST, "M1510,0 L1360,200 L1120,560 M1620,800 L1470,980 M0,105 L65,180"],
  [CENTRE, "M390,0 L480,110 L770,450 L1070,800 L1280,1040 L1568,1370 L1740,1568 M690,0 Q700,70 740,120 L850,240 Q840,300 870,330 Q900,355 970,360 Q1040,380 1080,450 Q1130,500 1140,550 Q1150,590 1170,600 Q1200,560 1250,570 L1370,615 Q1410,610 1440,560 M1010,90 L960,170 Q920,210 850,240 M870,330 L770,450 L630,630 M0,960 L110,820 L280,590 L370,480 Q430,430 490,460 L630,630 L700,710 M110,820 L350,1070 Q440,1130 520,1200 L600,1290 L740,1500 L760,1568 M830,850 Q880,900 920,980 Q960,1070 1010,1140 L1130,1250 M920,970 L1070,800 L1140,720 Q1150,640 1170,600 M1280,1040 L1130,1250 Q1080,1320 1085,1420 L1100,1568 M1280,1040 L1370,920 Q1480,850 1568,750 M1300,0 L1440,110 Q1450,160 1430,220 Q1410,290 1470,370 L1510,430 L1568,435 M1440,110 Q1470,50 1568,40 Q1600,30 1630,0"],
  [EAST, "M320,0 Q310,90 360,95 H490 L600,65 Q680,70 710,200 Q720,280 760,340 Q860,430 870,540 Q880,630 940,630 L1050,610 Q1100,640 1130,760 Q1120,870 1070,880 L900,830 Q850,830 830,920 Q810,1010 740,1100 Q730,1210 690,1220 H640 Q560,1210 530,1030 Q510,960 560,920 L620,840 M540,700 Q640,600 700,585 L870,535 L1080,480 L1220,470 Q1290,490 1310,560 M1470,950 Q1410,990 1410,1080 L1400,1150 Q1340,1250 1280,1290 Q1190,1340 1180,1420 L1170,1500 M660,1220 Q650,1310 710,1370 L650,1450 M710,1370 Q760,1320 820,1310 L830,1270 L970,1110 M230,1130 Q290,1160 310,1210 Q420,1210 450,1300 Q510,1350 520,1430 L550,1530 M0,435 L60,430 L100,320 Q120,295 170,290 M60,430 Q70,560 120,600 M430,0 L420,150 Q410,240 350,330"],
];

const avenues: Item[] = [
  [EAST, "M60,0 Q130,70 150,170 Q160,290 200,340 L270,430 L620,840 Q700,870 840,920 Q880,950 1000,1050 Q1050,1110 1110,1150 Q1230,1190 1280,1290 L1420,1450 L1490,1530 M350,330 L270,430 L0,740 M540,720 L290,1010 Q220,1100 190,1200 Q170,1290 130,1380 L0,1568 M1040,0 L1120,60 L1320,140 L1400,210 Q1440,240 1500,250"],
];

const secondary: Item[] = [
  [WEST, "M640,0 L1290,760 L1478,985 L1858,1430 L1978,1568 M345,0 L0,490"],
  [CENTRE, "M1390,0 L1200,270"],
  [EAST, "M290,1030 L700,1480 L780,1568 M1500,1270 L1310,1568"],
];

const primary: Item[] = [
  [CENTRE, "M960,0 L1200,270 L1568,700 M1200,270 L940,620 L640,1010 L520,1220 L380,1430 L290,1568"],
  [EAST, "M0,700 L290,1030 M1225,0 L1200,100 Q1150,260 1140,400 Q1135,500 1180,590 L1290,720 L1487,930 L1560,1010"],
];

const ramps: Item[] = [
  [WEST, "M615,0 Q600,110 530,220 Q430,370 415,430 Q400,510 370,570 M890,0 Q830,90 770,150 Q700,220 700,340 L705,380 M460,590 Q520,530 600,535 Q680,545 750,620 L860,740"],
];
const highway407: Item[] = [[WEST, "M635,0 Q620,160 635,300 Q660,450 740,560 L1130,1000 L1600,1600"]];
const highway401: Item[] = [[WEST, "M830,-10 L620,280 L380,590 L-30,1180"]];

const rails: Item[] = [
  [CENTRE, "M340,0 L0,500"],
  [WEST, "M1478,500 L1270,800 L1110,1040 L1000,1200 L770,1568"],
];

const powerLines: Item[] = [
  [WEST, "M1640,60 L1527,235 L1415,392 L1303,558 L1195,720 L1093,862 L976,1040 L850,1112 L730,1190 L617,1348 L510,1510 L470,1568 M1690,70 L1545,250 L1438,412 L1321,580 L1214,737 L1093,904 L990,1060 L864,1133 L743,1212 L635,1369 L528,1526 M1720,90 L1570,275 L1465,438 L1353,605 L1236,763 L1115,935 L1012,1092 L887,1165 L766,1243 L662,1395 L550,1568 M650,1568 L712,1452 L802,1322 L985,1270 L1169,1212 L1290,1358 L1415,1510 L1460,1568 M757,1510 L837,1390 M998,1342 L1151,1296 L1245,1411"],
  [CENTRE, "M85,63 L134,68 M85,63 L85,80 L139,104 L165,110 L201,120 M155,13 L165,110 M190,13 L201,120 M235,13 L230,80"],
];

const pylons: [number, number][] = [
  [1527, 235], [1415, 392], [1303, 558], [1195, 720], [1093, 862], [976, 1040], [850, 1112], [730, 1190], [617, 1348], [510, 1510],
  [1545, 250], [1438, 412], [1321, 580], [1214, 737], [1093, 904], [990, 1060], [864, 1133], [743, 1212], [635, 1369], [528, 1526],
  [1570, 275], [1465, 438], [1353, 605], [1236, 763], [1115, 935], [1012, 1092], [887, 1165], [766, 1243], [662, 1395],
  [712, 1452], [802, 1322], [985, 1270], [1169, 1212], [1290, 1358], [1415, 1510], [757, 1510], [837, 1390], [998, 1342], [1151, 1296], [1245, 1411],
  [1563, 63], [1612, 68], [1617, 104], [1643, 110], [1679, 120],
];

const marshes: [number, number][] = [
  [765, 505], [870, 625], [977, 650], [1165, 1110], [1107, 1190], [1080, 1305], [1195, 1270], [1345, 1190], [1393, 1130], [1403, 1007],
  [1487, 1168], [1407, 1285], [1000, 1388], [1610, 1245], [1770, 1380], [1720, 1500], [1540, 1310], [1285, 1270],
];

const footways: Item[] = [
  [CENTRE, "M470,120 L330,320 L200,440 M430,60 L300,170 M350,290 L540,500 M400,230 L620,470 M270,530 L620,910 M520,140 L440,240 M540,380 L590,500 L650,560 M240,460 L300,360 M830,20 L760,110 M380,650 L470,760 L560,880 M620,830 L700,900 M0,560 L70,480 M110,540 L60,600 M330,840 L290,920 M820,950 L830,1090 M720,980 L850,1170 L880,1250 M600,1140 L740,1310 M700,1100 L830,1260 M1200,200 L1190,120 M1200,1160 L1568,1568 M1240,1330 L1440,1560 M1430,1140 L1540,1190 M1420,1200 L1480,1250 M1340,1290 L1280,1370 M1290,1240 L1230,1330 M385,330 L490,440 M380,290 L400,410 M890,240 L1000,260 M1110,800 L1180,870 M960,630 L1030,650 M900,1240 L960,1180 M850,1200 L800,1130"],
  [DETAIL_A, "M980,65 L1040,190 L1150,180 M870,245 L920,260 L1030,230 M1000,290 L1070,370 M1150,180 L1250,190 M1200,20 L1360,50 L1340,130 M460,210 V250 M390,280 L420,300 M545,330 L580,320 M500,400 L510,360 M660,450 L680,440 M1110,390 L1170,530 L1210,570 M140,725 L180,728"],
  [EAST, "M410,230 L500,240 M560,100 L620,220 L700,290 M600,150 L620,300 L660,370 M640,220 L700,260 M600,440 L720,540 M580,470 L690,520 M420,570 L470,500 M240,590 L360,680 M200,560 L90,760 M280,640 L320,720 M870,560 L760,580 M470,830 L570,920 M700,920 L770,830 L840,870 M980,1020 L900,960 M550,1130 L620,1180 M1260,1060 L1330,1070 M1340,900 L1360,1040 M900,1260 L910,1360 M0,1300 L60,1200 M1420,1380 L1487,1430 M360,240 L280,340 M330,1380 L360,1480 M250,1090 L300,1060 M0,480 L60,540 M780,450 L880,560"],
];

const cycleways: Item[] = [
  [CENTRE, "M105,435 L160,440 L220,530 L280,600 L310,700 L350,775 L400,720 L450,820 L520,900 L620,940 L690,1000 L730,1090 L780,1150 L840,1250 L930,1300 L930,1380 M740,1150 L800,1230 L860,1330 L910,1380 L880,1450 L950,1540 M1375,50 L1310,150 L1240,250 M1050,490 L960,610 M1175,620 L1220,660 L1235,710 L1225,760 L1260,780 L1310,870 L1380,970 L1440,1040 L1490,1110 L1568,1170 M270,1290 L360,1400 M550,1140 L500,1230"],
  [EAST, "M180,15 L220,60 L190,110 L240,210 L330,310 L400,370 L490,410 L510,360 L500,250 L505,180 M540,180 L620,250 L600,350 L600,440 L560,490 L490,480 L410,410 L360,350 M565,490 L570,580 L640,650 L660,700 M725,710 L770,680 L830,690 L880,670 L1110,790 L1180,830 L1220,880 L1280,870 L1320,810 M1365,860 L1330,1010 L1240,1050 L1270,1140 L1270,1240 L1110,1300 L1030,1410 L990,1440 L890,1370 L830,1270 L740,1240 L680,1150 L610,1080 L650,980 L740,910 M750,860 L740,830 L715,780 M1225,990 L1270,1000 L1280,900 M0,1175 L130,1210 L210,1260 L280,1380 L370,1490 L480,1530 L550,1530"],
];

const dams: Item[] = [[EAST, "M515,180 L545,180 L580,220 L585,245 M412,382 L402,398 M473,420 L462,445 M1332,820 L1360,858"]];
const trails: Item[] = [[WEST, "M1000,1255 L1080,1245 L1160,1240 L1165,1300 L1250,1410 L1340,1540 M1210,660 L1270,590 L1380,430 L1530,230 M1115,920 L1200,780 M1475,130 L1510,210 M1475,130 L1568,40"], [CENTRE, "M0,60 L30,110 M10,160 L40,210"]];

type StrokeProps = {
  items: Item[];
  color: string;
  width: number;
  dash?: string;
  cap?: "round" | "butt";
};

function Strokes({ items, color, width, dash, cap = "round" }: StrokeProps) {
  return (
    <g fill="none" stroke={color} strokeWidth={width} strokeDasharray={dash} strokeLinecap={cap} strokeLinejoin="round">
      {items.map(([sheet, d], i) => (
        <path key={i} transform={sheet} d={d} vectorEffect="non-scaling-stroke" />
      ))}
    </g>
  );
}

type Label = {
  text: string;
  x: number;
  y: number;
  angle?: number;
  size?: number;
  color?: string;
  italic?: boolean;
  bold?: boolean;
  start?: boolean;
  halo?: string;
};

const labels: Label[] = [
  { text: "Highway 401 Collector", x: 74, y: 324, angle: -54, halo: "none" },
  { text: "Milton", x: 203, y: 215, angle: -50, size: 20, color: "#8d6b9a" },
  { text: "Milto", x: 423, y: 334, angle: 49, size: 20, color: "#a98cb4" },
  { text: "330B", x: 322, y: 49, size: 20, color: "#a8323c", italic: true },
  { text: "330A", x: 120, y: 309, size: 20, color: "#a8323c", italic: true },
  { text: "34A", x: 384, y: 263, size: 20, color: "#a8323c", italic: true },
  { text: "31", x: 646, y: 540, size: 20, color: "#a8323c", italic: true },
  { text: "Ninth Line", x: 412, y: 128, angle: 48, halo: "none" },
  { text: "Ninth Line", x: 603, y: 322, angle: 47, halo: "none" },
  { text: "Argentia Road", x: 564, y: 126, angle: -51 },
  { text: "alt Subdivision", x: 410, y: 528, angle: -50, size: 19, color: "#777777" },
  { text: "Lisgar", x: 790, y: 47, size: 20, color: "#5560b0", bold: true },
  { text: "Tenth Line West", x: 936, y: 102, angle: 46 },
  { text: "Lisgar Drive", x: 951, y: 528, angle: 52 },
  { text: "Trela", x: 1139, y: 540, angle: 82, start: true },
  { text: "Lake Aquitaine", x: 1622, y: 119, size: 19, color: "#3f8f55", italic: true },
  { text: "Park", x: 1622, y: 143, size: 19, color: "#3f8f55", italic: true },
  { text: "Meadowvale", x: 1451, y: 280, size: 19, color: "#c9403a", italic: true },
  { text: "Town Centre", x: 1451, y: 303, size: 19, color: "#c9403a", italic: true },
  { text: "Meadowvale", x: 1596, y: 274, size: 28, color: "#8a8a8a" },
  { text: "Erin Mills Parkway", x: 1916, y: 251, angle: 50, halo: "none" },
  { text: "Glen Erin Drive", x: 1780, y: 390, angle: 41 },
  { text: "Winston Churchill", x: 1545, y: 455, angle: 47, start: true, halo: "none" },
  { text: "Windwo", x: 1716, y: 491, angle: 70, start: true },
  { text: "Miller's G", x: 1424, y: 516, angle: 54, start: true },
];

function MapLabel({ text, x, y, angle = 0, size = 18, color = "#2b2b2b", italic, bold, start, halo = "#ffffffaa" }: Label) {
  return (
    <text
      x={x}
      y={y}
      transform={`rotate(${angle} ${x} ${y})`}
      fontSize={size}
      fontStyle={italic ? "italic" : "normal"}
      fontWeight={bold ? 700 : 500}
      textAnchor={start ? "start" : "middle"}
      dominantBaseline="central"
      fill={color}
      stroke={halo}
      strokeWidth={3}
      paintOrder="stroke"
      strokeLinejoin="round"
    >
      {text}
    </text>
  );
}

function MapDrawing() {
  return (
    <svg
      className="block h-full w-full font-['Noto_Sans',sans-serif]"
      viewBox="0 0 2017 586"
      preserveAspectRatio="xMidYMid slice"
      role="img"
      aria-label="Map of Meadowvale, Mississauga"
    >
      <rect width="2017" height="586" fill="#eef0d5" />
      {areas.map(([fill, sheet, d], i) => (
        <path key={i} transform={sheet} d={d} fill={fill} />
      ))}
      <Strokes items={streams} color="#aad3df" width={4} />
      <Strokes items={creek} color="#8cc9ee" width={4} dash="12 4" cap="butt" />
      <Strokes items={townhouses} color="#cfc4bc" width={7} cap="butt" />
      <Strokes items={service} color="#c8c8c8" width={4} />
      <Strokes items={service} color="#f5f5f5" width={2} />
      <Strokes items={minor} color="#c6c6c6" width={7} />
      <Strokes items={minor} color="#ffffff" width={5} />
      <Strokes items={footways} color="#ef9a90" width={2} dash="2 4" cap="butt" />
      <Strokes items={trails} color="#c8ad7c" width={2} dash="6 5" cap="butt" />
      <Strokes items={tertiary} color="#bcbcbc" width={11} />
      <Strokes items={avenues} color="#bcbcbc" width={14} />
      <Strokes items={tertiary} color="#ffffff" width={9} />
      <Strokes items={avenues} color="#ffffff" width={12} />
      <Strokes items={rails} color="#6b6b6b" width={6} cap="butt" />
      <Strokes items={rails} color="#ffffff" width={2} dash="14 12" cap="butt" />
      <Strokes items={secondary} color="#bfc17f" width={12} />
      <Strokes items={primary} color="#bfc17f" width={18} />
      <Strokes items={secondary} color="#f6f9bf" width={10} />
      <Strokes items={primary} color="#f6f9bf" width={16} />
      <Strokes items={ramps} color="#da6c8c" width={11} />
      <Strokes items={highway407} color="#da6c8c" width={28} />
      <Strokes items={highway401} color="#da6c8c" width={34} />
      <Strokes items={ramps} color="#dd96a3" width={7} />
      <Strokes items={highway407} color="#dd96a3" width={25} />
      <Strokes items={highway401} color="#dd96a3" width={31} />
      <Strokes items={highway407} color="#a0809e" width={2} dash="16 5 3 5" cap="butt" />
      <Strokes items={highway401} color="#a0809e" width={2} dash="16 5 3 5" cap="butt" />
      <Strokes items={cycleways} color="#6a6ae2" width={3} dash="3 5" cap="butt" />
      <Strokes items={dams} color="#333333" width={5} cap="butt" />
      <Strokes items={powerLines} color="#9a9a92" width={1} />
      <g fill="none" stroke="#77776f" strokeWidth={2}>
        {pylons.map(([px, py], i) => (
          <rect key={i} x={px * 0.4464 - 5} y={py * 0.3827 - 7} width={4} height={4} />
        ))}
      </g>
      <g stroke="#9fac86" strokeWidth={1} fill="none">
        {marshes.map(([mx, my], i) => (
          <path key={i} transform={`translate(${mx * 0.4464 - 3} ${my * 0.3827 - 5})`} d="M-7,4 H7 M0,4 V-6 M-1,4 L-5,-3 M1,4 L5,-3" />
        ))}
      </g>
      <g fill="none" stroke="#9adec0" strokeWidth={3}>
        <rect x="1171" y="532" width="24" height="44" rx="12" transform="rotate(28 1183 554)" />
        <rect x="1759" y="99" width="22" height="52" rx="11" transform="rotate(-42 1770 125)" />
        <rect x="1366" y="396" width="26" height="50" rx="13" transform="rotate(4 1379 421)" />
      </g>
      <circle cx="99" cy="354" r="7" fill="#ffffff" stroke="#c2c2c2" />
      <rect x="783" y="13" width="14" height="14" fill="#7b86b4" />

      {labels.map((label, i) => (
        <MapLabel key={i} {...label} />
      ))}

      <rect x="247" y="137" width="104" height="34" rx="3" fill="#e8ccd3" stroke="#cf93a2" strokeWidth={2} />
      <MapLabel text="407 ETR" x={299} y={155} size={20} color="#6d2744" halo="none" />
      <rect x="55" y="79" width="48" height="33" rx="3" fill="#ededed" stroke="#bdbdbd" strokeWidth={2} />
      <MapLabel text="8" x={86} y={97} size={18} color="#555555" halo="none" />
      <rect x="991" y="306" width="31" height="33" rx="4" fill="#f3f2d8" stroke="#c9c99a" strokeWidth={2} />
      <MapLabel text="5" x={1007} y={323} size={20} color="#6d6e45" halo="none" />

      <path
        d="M986 325 L958 296 C950 288 948 280 948 272 A38 38 0 0 1 1024 272 C1024 280 1021 288 1014 296 Z"
        fill="#444fae"
        stroke="#ffffff"
        strokeWidth={1}
      />
    </svg>
  );
}

function EventMap() {
  return (
    <section aria-label="Event location" className="relative h-[586px] overflow-hidden rounded-[48px]">
      <MapDrawing />
      <div className="absolute left-5 top-5 flex w-[70px] flex-col overflow-hidden rounded-lg border-4 border-black/20 bg-white bg-clip-padding">
        <button type="button" aria-label="Zoom in" className="flex h-[60px] items-center justify-center border-b-2 border-[#cccccc]">
          <svg className="mt-3 h-6 w-6" viewBox="0 0 24 24" stroke="#000" strokeWidth="3">
            <path d="M0 12H24M12 0V24" />
          </svg>
        </button>
        <button type="button" aria-label="Zoom out" className="flex h-[60px] items-center justify-center">
          <svg className="mt-3 h-6 w-6" viewBox="0 0 24 24" stroke="#000" strokeWidth="3">
            <path d="M0 12H24" />
          </svg>
        </button>
      </div>
      <div className="absolute bottom-0 right-0 bg-white/70 pr-3 pl-2.5 font-['Liberation_Sans',sans-serif] text-[22px] leading-[33px] text-[#333333]">
        <a href="#leaflet" className="text-[#2f78a8]">Leaflet</a>
        {" | © "}
        <a href="#osm" className="text-[#2f78a8]">OpenStreetMap</a>
        {" contributors"}
      </div>
    </section>
  );
}

/* ---------- page ---------- */

function Header() {
  return (
    <header className="flex items-center bg-[#444fae] pt-[15px] pr-[34px] pb-[27px] pl-[34px] font-['Liberation_Sans',Arial,sans-serif] text-white">
      <a href="#home" className="pb-1.5 text-[41px] leading-[48px]">LetsPlay!</a>
      <label className="ml-[46px] flex h-[70px] w-[468px] items-center rounded-lg bg-white/15 pl-[31px]">
        <MdSearch className="h-12 w-12 shrink-0" />
        <input
          type="search"
          aria-label="Search"
          placeholder="Search…"
          className="ml-[18px] w-full min-w-0 bg-transparent pb-1 text-[32px] leading-[38px] outline-none placeholder:text-[#a1a7d7]"
        />
      </label>
      <nav className="ml-auto flex items-center">
        <a href="#login" className="text-[32px] leading-[38px]">Login</a>
        <a href="#signup" className="ml-[34px] text-[32px] leading-[38px]">Sign Up</a>
        <button
          type="button"
          className="ml-[57px] h-[73px] rounded-lg px-[33px] pb-1.5 text-[29px] leading-[38px] shadow-[0_6px_2px_-4px_rgba(0,0,0,0.2),0_4px_4px_0_rgba(0,0,0,0.14),0_2px_10px_0_rgba(0,0,0,0.12)]"
        >
          CREATE EVENT
        </button>
      </nav>
    </header>
  );
}

function TitleBar() {
  return (
    <div className="flex items-center justify-between border-y-2 border-[#efefef] bg-white pt-[31px] pr-9 pb-[27px] pl-4">
      <h1 className="text-[87px] leading-[88px]">Tims meetup</h1>
      <div className="flex gap-[72px]">
        {socials.map((s) => (
          <button key={s.name} type="button" aria-label={`Share on ${s.name}`} className="h-[88px] w-[88px]">
            <svg viewBox="0 0 64 64" className="h-full w-full">
              <circle cx="32" cy="32" r="31" fill={s.color} stroke={s.color} strokeWidth="2" />
              <path d={s.d} fill="#ffffff" />
            </svg>
          </button>
        ))}
      </div>
    </div>
  );
}

function Participant({ name, removable }: { name: string; removable?: boolean }) {
  return (
    <li className="flex h-[104px] items-center rounded-xl border-4 border-[#efefef] bg-white bg-clip-padding px-8">
      <MdHowToReg className="h-12 w-12 shrink-0 text-[#757575]" />
      <span className="ml-16 pb-1 text-[32px] leading-[48px]">{name}</span>
      {removable && (
        <button type="button" aria-label={`Remove ${name}`} className="ml-auto pb-1.5 text-[#d66a66]">
          <MdRemoveCircleOutline className="h-12 w-12" />
        </button>
      )}
    </li>
  );
}

export default function App() {
  return (
    <div className="flex min-h-screen flex-col bg-[#f4f4f4] font-[Inter,sans-serif] text-black">
      <Header />
      <TitleBar />
      <main className="grid grow grid-cols-[3fr_7fr]">
        <aside className="pt-[60px] pr-[26px] pl-1.5">
          <h2 className="mb-[43px] pl-2.5 text-[36px] font-medium leading-[48px]">Participants</h2>
          <ul className="flex flex-col gap-5">
            <Participant name="David" />
            <Participant name="Bob" removable />
          </ul>
        </aside>
        <div className="flex min-w-0 flex-col pt-[30px] pr-9 pl-11">
          <EventMap />
          <article className="mt-10 rounded-xl border-2 border-[#efefef] bg-white px-10 pt-[72px] pb-[46px]">
            <h2 className="mb-10 text-[33px] leading-[48px]">Lets have a coffee</h2>
            <div className="text-[28px] leading-[48px]">
              <p>Address: Roundwood Court Mississauga, Golden Horseshoe, Canada</p>
              <p>Date: Tuesday, January 14th 2025</p>
              <p>Start time: 7:00 PM</p>
              <p>
                This is a <span className="text-[#0000ee]">public</span> event
              </p>
            </div>
          </article>
          <button
            type="button"
            className="mt-[72px] h-11 self-end rounded-lg border-2 border-[#c2c1c7] bg-[#efeff1] px-2.5 text-[26px] leading-[36px] text-[#6f6f6f]"
          >
            JOIN
          </button>
          <section aria-label="Comments" className="mt-[42px] grow rounded-t-lg bg-white shadow-[0_2px_6px_rgba(0,0,0,0.25)]" />
        </div>
      </main>
    </div>
  );
}
